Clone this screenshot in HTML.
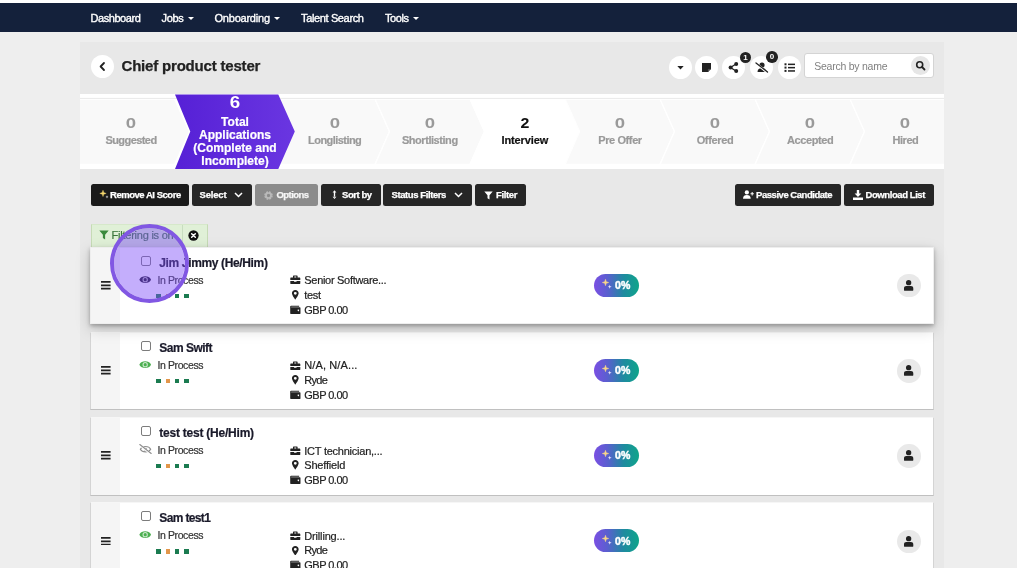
<!DOCTYPE html>
<html lang="en">
<head>
<meta charset="utf-8">
<title>Chief product tester</title>
<style>
*{box-sizing:border-box;margin:0;padding:0}
html,body{width:1017px;height:568px;overflow:hidden;background:#eee;font-family:"Liberation Sans",sans-serif;color:#222}
.abs,.t{position:absolute}
.t{white-space:nowrap;line-height:1}
#root{position:absolute;left:0;top:0;width:1017px;height:568px;overflow:hidden;will-change:transform}
#nav{position:absolute;left:0;top:3px;width:1017px;height:28.5px;background:#14213b}
#nav .t{color:#fff;font-size:11px;top:9.5px;letter-spacing:-.35px;-webkit-text-stroke:.35px #fff}
.caret{position:absolute;width:0;height:0;border-left:3.5px solid transparent;border-right:3.5px solid transparent;border-top:3.5px solid #fff;top:16.5px}
#wrap{position:absolute;left:80px;top:41.5px;width:864px;height:540px;background:#e8e8e8}
.circ{position:absolute;width:23px;height:23px;border-radius:50%;background:#fff}
.circ svg{position:absolute;left:.4px;top:0;width:23px;height:23px}
.badge{position:absolute;width:11.6px;height:11.6px;border-radius:50%;background:#222;color:#fff;font-size:8px;font-weight:700;text-align:center;line-height:11.6px}
#title{left:121.5px;top:57.5px;font-size:15px;font-weight:700;color:#222;letter-spacing:-.2px;-webkit-text-stroke:.25px #222}
#search{position:absolute;left:804.4px;top:53.4px;width:129.2px;height:24.9px;background:#fff;border:1px solid #d4d4d4;border-radius:3px}
#search .t{left:8.8px;top:6.3px;font-size:10.5px;color:#808080;letter-spacing:-.22px}
#search .sb{position:absolute;right:2.9px;top:2px;width:19px;height:19px;border-radius:50%;background:#e6e6e6}
#stages{position:absolute;left:80px;top:94px;width:864px;height:75px;background:#fff}
#stages svg{position:absolute;left:0;top:0}
.st{position:absolute;text-align:center;font-weight:700;color:#9a9a9a;transform:translateX(-50%);white-space:nowrap}
.st .n{font-size:14.5px;line-height:15px;display:block;transform:scaleX(1.28);position:relative;top:.6px}
.st.cur .n,.st.act .n{transform:scaleX(1.1)}
.st .l{font-size:11px;line-height:12px;display:block;margin-top:4px;letter-spacing:-.4px;-webkit-text-stroke:.2px currentColor}
.st.cur{color:#111}
.st.act{color:#fff}
.st.act .n{font-size:17px;line-height:17px;top:-.4px}
.st.act .l{font-size:12px;line-height:13px;margin-top:5px;letter-spacing:0}
.btn{position:absolute;top:184px;height:22px;background:#262626;border-radius:2.5px;color:#fff;font-size:9.5px;font-weight:700}
.btn .t{top:6.2px;letter-spacing:-.35px;-webkit-text-stroke:.25px currentColor}
.btn svg{position:absolute}
#chip{position:absolute;left:90.5px;top:224px;width:117.5px;height:23px;background:#e0f0d7;border:1px solid #c6dbb6;border-top-color:#d6e8ca;border-bottom:none}
#chip .div{position:absolute;left:90px;top:0;width:1px;height:23px;background:#c8ddc0}
#chip .t{left:20px;top:5.3px;font-size:11px;color:#3c763d;-webkit-text-stroke:.2px #3c763d;letter-spacing:-.35px}
.card{position:absolute;left:90.3px;width:844.1px;height:78px;background:#fff}
.card:after{content:"";position:absolute;left:0;top:0;right:0;bottom:0;border:1px solid #d4d4d4;border-top-color:#f6f6f6;border-bottom-color:#c0c0c0;pointer-events:none}
.card.raised{box-shadow:0 2px 4px rgba(0,0,0,.27),0 5px 14px rgba(0,0,0,.18)}
.card.raised:after{border-color:#eee}
.card .grip{position:absolute;left:0;top:0;width:29.6px;height:100%;background:#f5f5f5}
.card .ham{position:absolute;left:10.8px;top:34.6px;width:9.6px;height:8.6px}
.card .cb{position:absolute;left:50.3px;top:9.3px;width:10px;height:10px;border:1px solid #7c7c7c;border-radius:2px;background:#fff}
.card .name{left:69px;top:10px;font-size:12px;font-weight:700;color:#1a1a2a;letter-spacing:-.3px;-webkit-text-stroke:.2px #1a1a2a}
.card .stt{left:67.2px;top:28.2px;font-size:10.5px;color:#333;letter-spacing:-.3px;-webkit-text-stroke:.2px #333}
.card .eye{position:absolute;left:48.9px;top:28.3px;width:12.4px;height:9.3px}
.card .dot{position:absolute;top:47px;width:4.5px;height:4.5px;background:#1b7b50}
.card .dot.o{background:#e2964a}
.card .row{font-size:11px;color:#222;left:214px;margin-top:.5px;letter-spacing:-.25px;-webkit-text-stroke:.2px #222}
.card .ic{position:absolute;left:199.8px;width:10.6px;height:9.6px;margin-top:.7px}
.pill{position:absolute;left:503.5px;top:27.1px;width:45.2px;height:23.3px;border-radius:12px;background:linear-gradient(90deg,#7a4fe3 0%,#5a5fcf 30%,#1f8aa0 65%,#0ea58a 100%)}
.pill .t{left:21.6px;top:7.6px;font-size:10px;font-weight:700;color:#fff;letter-spacing:.2px;-webkit-text-stroke:.45px #fff;transform:scaleX(1.05);transform-origin:0 50%}
.pill svg{position:absolute;left:8.2px;top:5.9px}
.ucirc{position:absolute;left:807.1px;top:27.6px;width:23.3px;height:23.3px;border-radius:50%;background:#e9e9e9}
.ucirc svg{position:absolute;left:0;top:0}
#hl{position:absolute;left:109.6px;top:224.1px;width:79px;height:79px;border-radius:50%;background:rgba(125,77,248,.455);background-clip:padding-box;border:4.3px solid rgb(129,87,227)}
</style>
</head>
<body>
<div id="root">
<div style="position:absolute;left:0;top:0;width:1017px;height:3px;background:#fff"></div>
<div id="nav">
  <span class="t" style="left:90.5px;letter-spacing:-0.44px">Dashboard</span>
  <span class="t" style="left:161.5px;letter-spacing:-0.35px">Jobs</span><i class="caret" style="left:188px;top:13.5px"></i>
  <span class="t" style="left:214.5px;letter-spacing:-0.22px">Onboarding</span><i class="caret" style="left:274px;top:13.5px"></i>
  <span class="t" style="left:301px;letter-spacing:-0.36px">Talent Search</span>
  <span class="t" style="left:385px;letter-spacing:-0.45px">Tools</span><i class="caret" style="left:412.5px;top:13.5px"></i>
</div>
<div id="wrap"></div>

<div class="circ" style="left:91px;top:55px"><svg viewBox="0 0 23 23"><path d="M13 8 L9.6 11.5 L13 15" fill="none" stroke="#222" stroke-width="1.8" stroke-linecap="round" stroke-linejoin="round"/></svg></div>
<span class="t" id="title" style="letter-spacing:-0.19px">Chief product tester</span>

<div class="circ" style="left:668.5px;top:55.5px"><svg viewBox="0 0 23 23"><path d="M8.3 10 h6.4 l-3.2 3.4z" fill="#222"/></svg></div>
<div class="circ" style="left:695px;top:55.5px"><svg viewBox="0 0 23 23"><path d="M7 7 h9 v6 l-3 3 h-6z" fill="#222"/><path d="M13.4 16 v-2.6 h2.6" fill="none" stroke="#666" stroke-width=".8"/></svg></div>
<div class="circ" style="left:722px;top:55.5px"><svg viewBox="0 0 23 23"><path d="M14 8 L8.5 11.5 L14 15" fill="none" stroke="#222" stroke-width="1.3"/><circle cx="14.2" cy="8" r="2" fill="#222"/><circle cx="8.6" cy="11.5" r="2" fill="#222"/><circle cx="14.2" cy="15" r="2" fill="#222"/></svg></div>
<div class="circ" style="left:750px;top:55.5px"><svg viewBox="0 0 23 23"><circle cx="12" cy="9" r="2.6" fill="#222"/><path d="M7.5 16 c0-3 2-4 4.5-4 s4.5 1 4.5 4z" fill="#222"/><path d="M6 7.5 L17.5 16.5" stroke="#fff" stroke-width="2.4"/><path d="M6 7 L17.5 16" stroke="#222" stroke-width="1.3" stroke-linecap="round"/></svg></div>
<div class="circ" style="left:777.5px;top:55.5px"><svg viewBox="0 0 23 23"><g fill="#222"><rect x="6.5" y="7.3" width="2" height="2"/><rect x="6.5" y="10.6" width="2" height="2"/><rect x="6.5" y="13.9" width="2" height="2"/><rect x="10" y="7.6" width="7" height="1.5"/><rect x="10" y="10.9" width="7" height="1.5"/><rect x="10" y="14.2" width="7" height="1.5"/></g></svg></div>
<div class="badge" style="left:739.6px;top:51.5px">1</div>
<div class="badge" style="left:766.1px;top:51.3px">0</div>

<div id="search"><span class="t" style="letter-spacing:-0.24px">Search by name</span><div class="sb"><svg width="19" height="19" viewBox="-.5 -.5 19 19"><circle cx="8.2" cy="8.2" r="3" fill="none" stroke="#222" stroke-width="1.6"/><path d="M10.5 10.5 L13 13" stroke="#222" stroke-width="1.8" stroke-linecap="round"/></svg></div></div>

<div id="stages">
<svg width="864" height="75" viewBox="80 94 864 75">
  <defs>
    <linearGradient id="pg" x1="0" y1="0" x2="1" y2="0"><stop offset="0" stop-color="#5620d6"/><stop offset="1" stop-color="#6a36e1"/></linearGradient>
  </defs>
  <g fill="#f9f9f9" stroke="#fff" stroke-width="1.3">
    <polygon points="79,99 174.5,99 189.5,131.5 174.5,164.4 79,164.4"/>
    <polygon points="279.5,99 375,99 389.5,131.5 375,164.4 279.5,164.4 294,131.5"/>
    <polygon points="375,99 470,99 484.5,131.5 470,164.4 375,164.4 389.5,131.5"/>
    <polygon points="470,99 565,99 579.5,131.5 565,164.4 470,164.4 484.5,131.5" fill="#fff"/>
    <polygon points="565,99 660,99 674.5,131.5 660,164.4 565,164.4 579.5,131.5"/>
    <polygon points="660,99 755,99 769.5,131.5 755,164.4 660,164.4 674.5,131.5"/>
    <polygon points="755,99 850,99 864.5,131.5 850,164.4 755,164.4 769.5,131.5"/>
    <polygon points="850,99 945,99 945,164.4 850,164.4 864.5,131.5"/>
  </g>
  <line x1="80" y1="98.4" x2="944" y2="98.4" stroke="#e9e9e9" stroke-width="1"/>
  <polygon points="175,94.5 278.3,94.5 294.8,131.4 278.3,169 175,169 190.3,131.4" fill="url(#pg)"/>
</svg>
</div>
<div class="st" style="left:131px;top:115px"><span class="n">0</span><span class="l" style="letter-spacing:-0.57px">Suggested</span></div>
<div class="st act" style="left:235px;top:94px"><span class="n">6</span><span class="l">Total<br>Applications<br>(Complete and<br>Incomplete)</span></div>
<div class="st" style="left:334.7px;top:115px"><span class="n">0</span><span class="l" style="letter-spacing:-0.55px">Longlisting</span></div>
<div class="st" style="left:429.8px;top:115px"><span class="n">0</span><span class="l" style="letter-spacing:-0.45px">Shortlisting</span></div>
<div class="st cur" style="left:524.8px;top:115px"><span class="n">2</span><span class="l" style="letter-spacing:-0.11px">Interview</span></div>
<div class="st" style="left:620px;top:115px"><span class="n">0</span><span class="l" style="letter-spacing:-0.4px">Pre Offer</span></div>
<div class="st" style="left:715px;top:115px"><span class="n">0</span><span class="l" style="letter-spacing:-0.34px">Offered</span></div>
<div class="st" style="left:810.2px;top:115px"><span class="n">0</span><span class="l" style="letter-spacing:-0.39px">Accepted</span></div>
<div class="st" style="left:905.4px;top:115px"><span class="n">0</span><span class="l" style="letter-spacing:-0.46px">Hired</span></div>

<div class="btn" style="left:91px;width:98px;background:#1a1a1a"><svg style="left:7.5px;top:4.8px" width="12" height="12" viewBox="0 0 12 12"><path d="M4 1.2 L4.8 3.6 L7.2 4.4 L4.8 5.2 L4 7.6 L3.2 5.2 L.8 4.4 L3.2 3.6z" fill="#f5d76e" stroke="#f5d76e" stroke-width=".4" stroke-linejoin="round"/><path d="M8 6.3 L8.4 7.5 L9.6 7.9 L8.4 8.3 L8 9.5 L7.6 8.3 L6.4 7.9 L7.6 7.5z" fill="#eee"/></svg><span class="t" style="left:19px;letter-spacing:-0.47px">Remove AI Score</span></div>
<div class="btn" style="left:192.1px;width:59.9px"><span class="t" style="left:7.5px;letter-spacing:-0.2px">Select</span><svg style="left:42px;top:7px" width="9" height="8" viewBox="0 0 9 8"><path d="M1 2 L4.5 5.5 L8 2" fill="none" stroke="#fff" stroke-width="1.5"/></svg></div>
<div class="btn" style="left:255px;width:62.5px;background:#8b8b8b;color:#f6f6f6"><svg style="left:7.6px;top:5.6px" width="11" height="11" viewBox="0 0 10 10"><circle cx="5" cy="5" r="2.7" fill="none" stroke="#b9b9b9" stroke-width="2.4" stroke-dasharray="1.4 .72"/><circle cx="5" cy="5" r="2.3" fill="none" stroke="#b9b9b9" stroke-width="1.5"/></svg><span class="t" style="left:21.5px;letter-spacing:-0.57px">Options</span></div>
<div class="btn" style="left:321px;width:59.5px"><svg style="left:10.8px;top:6.3px" width="5" height="9.4" viewBox="0 0 6 11"><path d="M3 0.3 L5.3 3 H.7z M3 10.7 L5.3 8 H.7z M2.2 2.5 h1.6 v6 h-1.6z" fill="#fff"/></svg><span class="t" style="left:21px;letter-spacing:-0.44px">Sort by</span></div>
<div class="btn" style="left:383px;width:89px"><span class="t" style="left:8.5px;letter-spacing:-0.41px">Status Filters</span><svg style="left:71px;top:7px" width="9" height="8" viewBox="0 0 9 8"><path d="M1 2 L4.5 5.5 L8 2" fill="none" stroke="#fff" stroke-width="1.5"/></svg></div>
<div class="btn" style="left:475px;width:51px"><svg style="left:9px;top:6.5px" width="9" height="9" viewBox="0 0 9 9"><path d="M.3 .5 h8.4 l-3.2 3.8 v4.2 l-2 -1.3 v-2.9z" fill="#fff"/></svg><span class="t" style="left:21px;letter-spacing:-0.35px">Filter</span></div>
<div class="btn" style="left:735.1px;width:105.9px"><svg style="left:7.6px;top:6.2px" width="11" height="9.2" viewBox="0 0 12 10"><circle cx="4.2" cy="2.6" r="2.3" fill="#fff"/><path d="M0 9.5 c0-3 1.8-4 4.2-4 s4.2 1 4.2 4z" fill="#fff"/><path d="M10 2.3 v3.6 M8.2 4.1 h3.6" stroke="#fff" stroke-width="1.1"/></svg><span class="t" style="left:21px;letter-spacing:-0.47px">Passive Candidate</span></div>
<div class="btn" style="left:844px;width:89.5px"><svg style="left:9px;top:6px" width="10" height="10" viewBox="0 0 10 10"><path d="M3.8 0 h2.4 v3.6 h2.2 L5 7 L1.6 3.6 h2.2z M0 7.4 h10 v2.6 h-10z" fill="#fff"/></svg><span class="t" style="left:21.5px;letter-spacing:-0.42px">Download List</span></div>

<div id="chip"><svg style="position:absolute;left:7px;top:5.2px" width="10" height="10" viewBox="0 0 9 9"><path d="M.3 .5 h8.4 l-3.2 3.8 v4.2 l-2 -1.3 v-2.9z" fill="#3a8a3c"/></svg><span class="t" style="letter-spacing:-0.23px">Filtering is on</span><div class="div"></div>
<svg style="position:absolute;left:96.5px;top:5.3px" width="11" height="11" viewBox="0 0 12 12"><circle cx="6" cy="6" r="5.6" fill="#111"/><path d="M4 4 L8 8 M8 4 L4 8" stroke="#fff" stroke-width="1.6" stroke-linecap="round"/></svg></div>

<!-- cards -->
<div class="card" style="top:331.7px;height:78.3px">
  <div class="grip"></div><svg class="ham" viewBox="0 0 9.6 8.6"><path d="M0 0 h9.6 v1.8 h-9.6z M0 3.4 h9.6 v1.8 h-9.6z M0 6.8 h9.6 v1.8 h-9.6z" fill="#222"/></svg><div class="cb"></div>
  <span class="t name" style="letter-spacing:-0.52px">Sam Swift</span>
  <svg class="eye" viewBox="0 0 12 9"><path d="M.3 4.5 C2.4 .2 9.6 .2 11.7 4.5 C9.6 8.8 2.4 8.8 .3 4.5z" fill="#4caf50"/><circle cx="6" cy="4.5" r="2.6" fill="#fff" fill-opacity=".7"/><circle cx="6" cy="4.5" r="1.5" fill="#4caf50"/></svg>
  <span class="t stt" style="letter-spacing:-0.4px">In Process</span>
  <i class="dot" style="left:65.9px"></i><i class="dot o" style="left:75.4px"></i><i class="dot" style="left:84.4px"></i><i class="dot" style="left:93.9px"></i>
  <svg class="ic" style="top:28.3px" viewBox="0 0 11 10"><path d="M3.6 .6 h3.8 q.5 0 .5 .5 v1.4 h2.3 q.5 0 .5 .5 v2.3 h-10.4 v-2.3 q0 -.5 .5 -.5 h2.3 v-1.4 q0 -.5 .5 -.5z M4.5 1.5 v1 h2 v-1z M.3 6.2 h3.9 v.9 h2.6 v-.9 h3.9 v2.7 q0 .5 -.5 .5 h-9.4 q-.5 0 -.5 -.5z" fill="#222" fill-rule="evenodd"/></svg><span class="t row" style="top:28.3px;letter-spacing:0.11px">N/A, N/A...</span>
  <svg class="ic" style="top:42.8px" viewBox="0 0 11 10"><path d="M5.5 0 C3.5 0 2 1.5 2 3.4 C2 5.5 5.5 10 5.5 10 C5.5 10 9 5.5 9 3.4 C9 1.5 7.5 0 5.5 0z M5.5 2 a1.5 1.5 0 1 1 0 3 a1.5 1.5 0 1 1 0 -3z" fill="#222" fill-rule="evenodd"/></svg><span class="t row" style="top:42.8px;letter-spacing:-0.7px">Ryde</span>
  <svg class="ic" style="top:57.7px" viewBox="0 0 11 10"><path d="M1.2 .7 h8.3 v1 h-8 q-.4 0 -.4 .3 q0 .3 .4 .3 h8.9 q.5 0 .5 .5 v6 q0 .5 -.5 .5 h-9.6 q-.6 0 -.6 -.6 v-7.2 q0 -.8 1 -.8z M8.7 4.8 a.8 .8 0 1 0 .01 0z" fill="#222" fill-rule="evenodd"/></svg><span class="t row" style="top:57.7px;letter-spacing:-0.53px">GBP 0.00</span>
  <div class="pill"><svg width="11" height="11" viewBox="0 0 11 11"><path d="M3.5 .3 L4.3 2.7 L6.7 3.5 L4.3 4.3 L3.5 6.7 L2.7 4.3 L.3 3.5 L2.7 2.7z" fill="#f7d58a" stroke="#f7d58a" stroke-width=".5" stroke-linejoin="round"/><path d="M7.7 5.7 L8.2 7.2 L9.7 7.7 L8.2 8.2 L7.7 9.7 L7.2 8.2 L5.7 7.7 L7.2 7.2z" fill="#f0e8ff"/></svg><span class="t">0%</span></div>
  <div class="ucirc"><svg width="23.3" height="23.3" viewBox="0 0 23.3 23.3"><circle cx="11.65" cy="8.7" r="2.65" fill="#222"/><path d="M7 15.9 v-1.5 c0-1.5 1-2.3 2.3-2.3 h4.7 c1.3 0 2.3 .8 2.3 2.3 v1.5 q0 .9 -.9 .9 h-7.5 q-.9 0 -.9 -.9z" fill="#222"/></svg></div>
</div>
<div class="card" style="top:416.8px;height:79px">
  <div class="grip"></div><svg class="ham" viewBox="0 0 9.6 8.6"><path d="M0 0 h9.6 v1.8 h-9.6z M0 3.4 h9.6 v1.8 h-9.6z M0 6.8 h9.6 v1.8 h-9.6z" fill="#222"/></svg><div class="cb"></div>
  <span class="t name" style="letter-spacing:-0.23px">test test (He/Him)</span>
  <svg class="eye" style="left:48.6px;top:27.6px;width:13px;height:10.5px" viewBox="0 0 13 10.5"><path d="M1.3 5.2 C3.2 1.6 9.8 1.6 11.7 5.2 C9.8 8.8 3.2 8.8 1.3 5.2z" fill="none" stroke="#8e8e8e" stroke-width="1.1"/><circle cx="6.5" cy="5.2" r="1.5" fill="#8e8e8e"/><path d="M1 1.1 L12.2 10.1" stroke="#fff" stroke-width="2"/><path d="M.8 .5 L12.2 9.5" stroke="#8e8e8e" stroke-width="1.1" stroke-linecap="round"/></svg>
  <span class="t stt" style="letter-spacing:-0.4px">In Process</span>
  <i class="dot" style="left:65.9px"></i><i class="dot o" style="left:75.4px"></i><i class="dot" style="left:84.4px"></i><i class="dot" style="left:93.9px"></i>
  <svg class="ic" style="top:28.3px" viewBox="0 0 11 10"><path d="M3.6 .6 h3.8 q.5 0 .5 .5 v1.4 h2.3 q.5 0 .5 .5 v2.3 h-10.4 v-2.3 q0 -.5 .5 -.5 h2.3 v-1.4 q0 -.5 .5 -.5z M4.5 1.5 v1 h2 v-1z M.3 6.2 h3.9 v.9 h2.6 v-.9 h3.9 v2.7 q0 .5 -.5 .5 h-9.4 q-.5 0 -.5 -.5z" fill="#222" fill-rule="evenodd"/></svg><span class="t row" style="top:28.3px;letter-spacing:-0.24px">ICT technician,...</span>
  <svg class="ic" style="top:42.8px" viewBox="0 0 11 10"><path d="M5.5 0 C3.5 0 2 1.5 2 3.4 C2 5.5 5.5 10 5.5 10 C5.5 10 9 5.5 9 3.4 C9 1.5 7.5 0 5.5 0z M5.5 2 a1.5 1.5 0 1 1 0 3 a1.5 1.5 0 1 1 0 -3z" fill="#222" fill-rule="evenodd"/></svg><span class="t row" style="top:42.8px;letter-spacing:-0.19px">Sheffield</span>
  <svg class="ic" style="top:57.7px" viewBox="0 0 11 10"><path d="M1.2 .7 h8.3 v1 h-8 q-.4 0 -.4 .3 q0 .3 .4 .3 h8.9 q.5 0 .5 .5 v6 q0 .5 -.5 .5 h-9.6 q-.6 0 -.6 -.6 v-7.2 q0 -.8 1 -.8z M8.7 4.8 a.8 .8 0 1 0 .01 0z" fill="#222" fill-rule="evenodd"/></svg><span class="t row" style="top:57.7px;letter-spacing:-0.53px">GBP 0.00</span>
  <div class="pill"><svg width="11" height="11" viewBox="0 0 11 11"><path d="M3.5 .3 L4.3 2.7 L6.7 3.5 L4.3 4.3 L3.5 6.7 L2.7 4.3 L.3 3.5 L2.7 2.7z" fill="#f7d58a" stroke="#f7d58a" stroke-width=".5" stroke-linejoin="round"/><path d="M7.7 5.7 L8.2 7.2 L9.7 7.7 L8.2 8.2 L7.7 9.7 L7.2 8.2 L5.7 7.7 L7.2 7.2z" fill="#f0e8ff"/></svg><span class="t">0%</span></div>
  <div class="ucirc"><svg width="23.3" height="23.3" viewBox="0 0 23.3 23.3"><circle cx="11.65" cy="8.7" r="2.65" fill="#222"/><path d="M7 15.9 v-1.5 c0-1.5 1-2.3 2.3-2.3 h4.7 c1.3 0 2.3 .8 2.3 2.3 v1.5 q0 .9 -.9 .9 h-7.5 q-.9 0 -.9 -.9z" fill="#222"/></svg></div>
</div>
<div class="card" style="top:502.1px;height:79px">
  <div class="grip"></div><svg class="ham" viewBox="0 0 9.6 8.6"><path d="M0 0 h9.6 v1.8 h-9.6z M0 3.4 h9.6 v1.8 h-9.6z M0 6.8 h9.6 v1.8 h-9.6z" fill="#222"/></svg><div class="cb"></div>
  <span class="t name" style="letter-spacing:-0.64px">Sam test1</span>
  <svg class="eye" viewBox="0 0 12 9"><path d="M.3 4.5 C2.4 .2 9.6 .2 11.7 4.5 C9.6 8.8 2.4 8.8 .3 4.5z" fill="#4caf50"/><circle cx="6" cy="4.5" r="2.6" fill="#fff" fill-opacity=".7"/><circle cx="6" cy="4.5" r="1.5" fill="#4caf50"/></svg>
  <span class="t stt" style="letter-spacing:-0.4px">In Process</span>
  <i class="dot" style="left:65.9px"></i><i class="dot o" style="left:75.4px"></i><i class="dot" style="left:84.4px"></i><i class="dot" style="left:93.9px"></i>
  <svg class="ic" style="top:28.3px" viewBox="0 0 11 10"><path d="M3.6 .6 h3.8 q.5 0 .5 .5 v1.4 h2.3 q.5 0 .5 .5 v2.3 h-10.4 v-2.3 q0 -.5 .5 -.5 h2.3 v-1.4 q0 -.5 .5 -.5z M4.5 1.5 v1 h2 v-1z M.3 6.2 h3.9 v.9 h2.6 v-.9 h3.9 v2.7 q0 .5 -.5 .5 h-9.4 q-.5 0 -.5 -.5z" fill="#222" fill-rule="evenodd"/></svg><span class="t row" style="top:28.3px;letter-spacing:-0.17px">Drilling...</span>
  <svg class="ic" style="top:42.8px" viewBox="0 0 11 10"><path d="M5.5 0 C3.5 0 2 1.5 2 3.4 C2 5.5 5.5 10 5.5 10 C5.5 10 9 5.5 9 3.4 C9 1.5 7.5 0 5.5 0z M5.5 2 a1.5 1.5 0 1 1 0 3 a1.5 1.5 0 1 1 0 -3z" fill="#222" fill-rule="evenodd"/></svg><span class="t row" style="top:42.8px;letter-spacing:-0.7px">Ryde</span>
  <svg class="ic" style="top:57.7px" viewBox="0 0 11 10"><path d="M1.2 .7 h8.3 v1 h-8 q-.4 0 -.4 .3 q0 .3 .4 .3 h8.9 q.5 0 .5 .5 v6 q0 .5 -.5 .5 h-9.6 q-.6 0 -.6 -.6 v-7.2 q0 -.8 1 -.8z M8.7 4.8 a.8 .8 0 1 0 .01 0z" fill="#222" fill-rule="evenodd"/></svg><span class="t row" style="top:57.7px;letter-spacing:-0.53px">GBP 0.00</span>
  <div class="pill"><svg width="11" height="11" viewBox="0 0 11 11"><path d="M3.5 .3 L4.3 2.7 L6.7 3.5 L4.3 4.3 L3.5 6.7 L2.7 4.3 L.3 3.5 L2.7 2.7z" fill="#f7d58a" stroke="#f7d58a" stroke-width=".5" stroke-linejoin="round"/><path d="M7.7 5.7 L8.2 7.2 L9.7 7.7 L8.2 8.2 L7.7 9.7 L7.2 8.2 L5.7 7.7 L7.2 7.2z" fill="#f0e8ff"/></svg><span class="t">0%</span></div>
  <div class="ucirc"><svg width="23.3" height="23.3" viewBox="0 0 23.3 23.3"><circle cx="11.65" cy="8.7" r="2.65" fill="#222"/><path d="M7 15.9 v-1.5 c0-1.5 1-2.3 2.3-2.3 h4.7 c1.3 0 2.3 .8 2.3 2.3 v1.5 q0 .9 -.9 .9 h-7.5 q-.9 0 -.9 -.9z" fill="#222"/></svg></div>
</div>
<div class="card raised" style="top:246.5px;height:77.5px">
  <div class="grip"></div><svg class="ham" viewBox="0 0 9.6 8.6"><path d="M0 0 h9.6 v1.8 h-9.6z M0 3.4 h9.6 v1.8 h-9.6z M0 6.8 h9.6 v1.8 h-9.6z" fill="#222"/></svg><div class="cb"></div>
  <span class="t name" style="letter-spacing:-0.36px">Jim Jimmy (He/Him)</span>
  <svg class="eye" viewBox="0 0 12 9"><path d="M.3 4.5 C2.4 .2 9.6 .2 11.7 4.5 C9.6 8.8 2.4 8.8 .3 4.5z" fill="#1f1a30"/><circle cx="6" cy="4.5" r="2.6" fill="#fff" fill-opacity=".7"/><circle cx="6" cy="4.5" r="1.5" fill="#1f1a30"/></svg>
  <span class="t stt" style="letter-spacing:-0.4px">In Process</span>
  <i class="dot" style="left:65.9px"></i><i class="dot o" style="left:75.4px"></i><i class="dot" style="left:84.4px"></i><i class="dot" style="left:93.9px"></i>
  <svg class="ic" style="top:28.3px" viewBox="0 0 11 10"><path d="M3.6 .6 h3.8 q.5 0 .5 .5 v1.4 h2.3 q.5 0 .5 .5 v2.3 h-10.4 v-2.3 q0 -.5 .5 -.5 h2.3 v-1.4 q0 -.5 .5 -.5z M4.5 1.5 v1 h2 v-1z M.3 6.2 h3.9 v.9 h2.6 v-.9 h3.9 v2.7 q0 .5 -.5 .5 h-9.4 q-.5 0 -.5 -.5z" fill="#222" fill-rule="evenodd"/></svg><span class="t row" style="top:28.3px;letter-spacing:-0.3px">Senior Software...</span>
  <svg class="ic" style="top:42.8px" viewBox="0 0 11 10"><path d="M5.5 0 C3.5 0 2 1.5 2 3.4 C2 5.5 5.5 10 5.5 10 C5.5 10 9 5.5 9 3.4 C9 1.5 7.5 0 5.5 0z M5.5 2 a1.5 1.5 0 1 1 0 3 a1.5 1.5 0 1 1 0 -3z" fill="#222" fill-rule="evenodd"/></svg><span class="t row" style="top:42.8px;letter-spacing:-0.31px">test</span>
  <svg class="ic" style="top:57.7px" viewBox="0 0 11 10"><path d="M1.2 .7 h8.3 v1 h-8 q-.4 0 -.4 .3 q0 .3 .4 .3 h8.9 q.5 0 .5 .5 v6 q0 .5 -.5 .5 h-9.6 q-.6 0 -.6 -.6 v-7.2 q0 -.8 1 -.8z M8.7 4.8 a.8 .8 0 1 0 .01 0z" fill="#222" fill-rule="evenodd"/></svg><span class="t row" style="top:57.7px;letter-spacing:-0.53px">GBP 0.00</span>
  <div class="pill"><svg width="11" height="11" viewBox="0 0 11 11"><path d="M3.5 .3 L4.3 2.7 L6.7 3.5 L4.3 4.3 L3.5 6.7 L2.7 4.3 L.3 3.5 L2.7 2.7z" fill="#f7d58a" stroke="#f7d58a" stroke-width=".5" stroke-linejoin="round"/><path d="M7.7 5.7 L8.2 7.2 L9.7 7.7 L8.2 8.2 L7.7 9.7 L7.2 8.2 L5.7 7.7 L7.2 7.2z" fill="#f0e8ff"/></svg><span class="t">0%</span></div>
  <div class="ucirc"><svg width="23.3" height="23.3" viewBox="0 0 23.3 23.3"><circle cx="11.65" cy="8.7" r="2.65" fill="#222"/><path d="M7 15.9 v-1.5 c0-1.5 1-2.3 2.3-2.3 h4.7 c1.3 0 2.3 .8 2.3 2.3 v1.5 q0 .9 -.9 .9 h-7.5 q-.9 0 -.9 -.9z" fill="#222"/></svg></div>
</div>
<div id="hl"></div>
</div>
</body>
</html>
